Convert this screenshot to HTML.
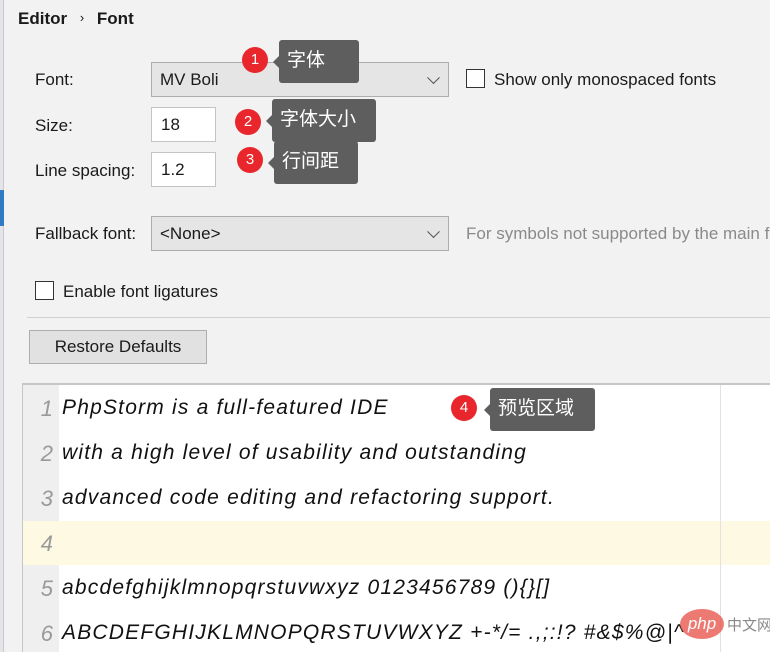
<!DOCTYPE html>
<html><head><meta charset="utf-8"><style>
*{margin:0;padding:0;box-sizing:border-box}
body{width:770px;height:652px;overflow:hidden;background:#f2f2f2;font-family:"Liberation Sans","Noto Sans CJK SC",sans-serif;color:#1a1a1a;position:relative}
.a{position:absolute;white-space:nowrap}
.lbl{font-size:17px;line-height:20px}
.combo{position:absolute;background:#e5e5e5;border:1px solid #adadad;font-size:17px;padding-left:8px}
.chev{position:absolute;right:10px;top:50%;width:9px;height:9px;border-right:1.5px solid #555;border-bottom:1.5px solid #555;transform:translateY(-75%) rotate(45deg)}
.inp{position:absolute;background:#fff;border:1px solid #c4c4c4;font-size:17px;padding-left:9px}
.cb{position:absolute;width:19px;height:19px;border:1.5px solid #333;background:#fff}
.badge{position:absolute;width:26px;height:26px;border-radius:50%;background:#e8262b;color:#fff;font-size:15px;text-align:center;line-height:26px}
.tip{position:absolute;background:#5e5e5e;color:#fff;font-size:19px;border-radius:3px;padding-left:8px}
.tip:before{content:"";position:absolute;left:-6px;top:50%;margin-top:-6px;border-top:6px solid transparent;border-bottom:6px solid transparent;border-right:6px solid #5e5e5e}
.ln{position:absolute;left:22px;width:31px;text-align:right;color:#999;font-style:italic;font-size:22px}
.code{position:absolute;left:62px;font-style:italic;font-size:21px;letter-spacing:1.2px;color:#111}
</style></head><body>
<div class="a" style="left:0;top:0;width:4px;height:652px;background:#e3e5e8;border-right:1px solid #c8cbd0"></div>
<div class="a" style="left:0;top:190px;width:4px;height:36px;background:#2f7cc4"></div>
<div class="a" style="left:18px;top:9px;font-size:17px;font-weight:bold">Editor <span style="font-weight:normal;font-size:13px;margin:0 8px;position:relative;top:-2px">›</span> Font</div>

<div class="a lbl" style="left:35px;top:70px">Font:</div>
<div class="combo" style="left:151px;top:62px;width:298px;height:35px;line-height:33px">MV Boli<div class="chev"></div></div>
<div class="cb" style="left:466px;top:69px"></div>
<div class="a lbl" style="left:494px;top:70px">Show only monospaced fonts</div>

<div class="a lbl" style="left:35px;top:116px">Size:</div>
<div class="inp" style="left:151px;top:107px;width:65px;height:35px;line-height:33px">18</div>
<div class="a lbl" style="left:35px;top:161px">Line spacing:</div>
<div class="inp" style="left:151px;top:152px;width:65px;height:35px;line-height:33px">1.2</div>

<div class="a lbl" style="left:35px;top:224px">Fallback font:</div>
<div class="combo" style="left:151px;top:216px;width:298px;height:35px;line-height:33px">&lt;None&gt;<div class="chev"></div></div>
<div class="a lbl" style="left:466px;top:224px;color:#8a8a8a">For symbols not supported by the main font</div>

<div class="cb" style="left:35px;top:281px"></div>
<div class="a lbl" style="left:63px;top:282px">Enable font ligatures</div>
<div class="a" style="left:27px;top:317px;width:743px;height:1px;background:#d0d0d0"></div>
<div class="a" style="left:29px;top:330px;width:178px;height:34px;background:#e1e1e1;border:1px solid #adadad;font-size:17px;text-align:center;line-height:32px">Restore Defaults</div>

<div class="a" style="left:22px;top:383px;width:748px;height:269px;background:#fff;border-top:2px solid #c6c6c6;border-left:1px solid #c6c6c6"></div>
<div class="a" style="left:23px;top:385px;width:36px;height:267px;background:#efefef"></div>
<div class="a" style="left:23px;top:521px;width:747px;height:44px;background:#fdf9e3"></div>
<div class="a" style="left:720px;top:385px;width:1px;height:267px;background:#e2e2e2"></div>

<div class="ln" style="top:396px">1</div><div class="code" style="top:396px">PhpStorm is a full-featured IDE</div>
<div class="ln" style="top:441px">2</div><div class="code" style="top:441px">with a high level of usability and outstanding</div>
<div class="ln" style="top:486px">3</div><div class="code" style="top:486px">advanced code editing and refactoring support.</div>
<div class="ln" style="top:531px">4</div>
<div class="ln" style="top:576px">5</div><div class="code" style="top:576px">abcdefghijklmnopqrstuvwxyz 0123456789 (){}[]</div>
<div class="ln" style="top:621px">6</div><div class="code" style="top:621px">ABCDEFGHIJKLMNOPQRSTUVWXYZ +-*/= .,;:!? #&amp;$%@|^</div>

<div class="badge" style="left:242px;top:47px">1</div>
<div class="tip" style="left:279px;top:40px;width:80px;height:43px;line-height:42px">字体</div>
<div class="badge" style="left:235px;top:109px">2</div>
<div class="tip" style="left:272px;top:99px;width:104px;height:43px;line-height:42px">字体大小</div>
<div class="badge" style="left:237px;top:147px">3</div>
<div class="tip" style="left:274px;top:141px;width:84px;height:43px;line-height:42px">行间距</div>
<div class="badge" style="left:451px;top:395px">4</div>
<div class="tip" style="left:490px;top:388px;width:105px;height:43px;line-height:42px">预览区域</div>

<div class="a" style="left:680px;top:609px;width:44px;height:30px;border-radius:50%;background:#e9594f;opacity:.8;color:#fff;font-style:italic;font-size:17px;text-align:center;line-height:30px">php</div>
<div class="a" style="left:727px;top:614px;font-size:15px;color:#888">中文网</div>
</body></html>
